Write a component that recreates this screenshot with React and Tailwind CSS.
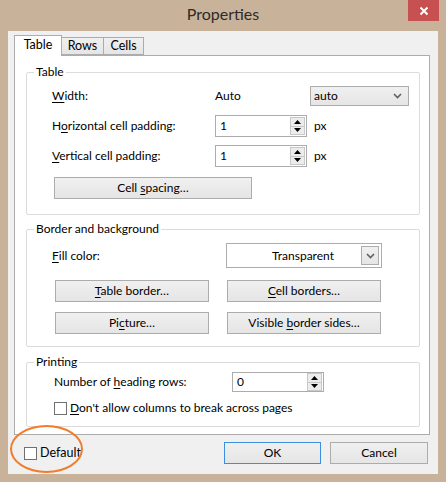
import React from 'react'

const font = { fontFamily: '"Segoe UI", Lato, "Noto Sans", sans-serif' }

function U({ children }) {
  return <span className="underline underline-offset-2">{children}</span>
}

function Button({ children, className = '' }) {
  return (
    <div className={`flex items-center justify-center border border-[#acacac] bg-gradient-to-b from-[#f0f0f0] to-[#e5e5e5] text-[12px] text-black ${className}`}>
      {children}
    </div>
  )
}

function Chevron() {
  return (
    <svg width="9" height="6" viewBox="0 0 9 6">
      <path d="M1 1 L4.5 4.5 L8 1" fill="none" stroke="#606060" strokeWidth="1.6" />
    </svg>
  )
}

function Spin({ value, h = 'h-[22px]' }) {
  return (
    <div className={`flex w-[92px] ${h} items-center border border-[#acacac] bg-white pl-[4px] pr-[1px]`}>
      <span className="flex-1 text-[12px] leading-none">{value}</span>
      <div className="flex h-[18px] w-[15px] flex-col border border-[#c8c8c8] bg-[#ececec]">
        <div className="flex flex-1 items-center justify-center border-b border-[#c8c8c8]">
          <svg width="7" height="4" viewBox="0 0 7 4"><path d="M0 4 L3.5 0 L7 4 Z" fill="#000" /></svg>
        </div>
        <div className="flex flex-1 items-center justify-center">
          <svg width="7" height="4" viewBox="0 0 7 4"><path d="M0 0 L3.5 4 L7 0 Z" fill="#000" /></svg>
        </div>
      </div>
    </div>
  )
}

function Check() {
  return <div className="h-[13px] w-[13px] border border-[#707070] bg-white" />
}

function Group({ title, className = '', inner = '', children }) {
  return (
    <fieldset className={`rounded-[2px] border border-[#dcdcdc] ${className}`}>
      <legend className="ml-[7px] px-[2px] text-[12px] leading-[16px]">{title}</legend>
      <div className={inner}>{children}</div>
    </fieldset>
  )
}

export default function App() {
  return (
    <div className="flex h-[482px] w-[446px] flex-col bg-[#c9b29a] text-black" style={font}>
      {/* title bar */}
      <div className="grid h-[31px] shrink-0 grid-cols-[1fr_auto_1fr]">
        <div />
        <div className="pt-[4px] text-[16px] leading-[20px] text-[#2b2b2b]">Properties</div>
        <div className="flex justify-end pr-[7px]">
          <div className="flex h-[21px] w-[31px] items-center justify-center bg-[#c75050]">
            <svg width="10" height="10" viewBox="0 0 10 10">
              <path d="M1.5 1.5 L8.5 8.5 M8.5 1.5 L1.5 8.5" stroke="#fff" strokeWidth="2" />
            </svg>
          </div>
        </div>
      </div>

      {/* client area */}
      <div className="mx-[8px] mb-[8px] flex flex-1 flex-col bg-[#f0f0f0] pl-[6px] pr-[8px] pt-[4px]">
        {/* tabs */}
        <div className="flex h-[20px] items-end text-[12.5px]">
          <div className="relative z-10 -mb-px flex h-[21px] w-[48px] items-center justify-center border border-b-0 border-[#acacac] bg-white pb-[2px]">
            Table
          </div>
          <div className="flex h-[18px] w-[42px] items-center justify-center border border-l-0 border-[#acacac] bg-gradient-to-b from-[#f0f0f0] to-[#e5e5e5]">
            Rows
          </div>
          <div className="flex h-[18px] w-[40px] items-center justify-center border border-l-0 border-[#acacac] bg-gradient-to-b from-[#f0f0f0] to-[#e5e5e5]">
            Cells
          </div>
        </div>

        {/* panel */}
        <div className="flex flex-col border border-[#acacac] bg-white pb-[7px] pl-[11px] pr-[9px] pt-[8px] text-[12px]">
          <Group title="Table" inner="pb-[15px] pl-[25px]">
            <div className="mt-[6px] flex h-[20px] items-center">
              <div className="w-[163px]"><U>W</U>idth:</div>
              <div className="w-[95px]">Auto</div>
              <div className="flex h-[20px] w-[99px] items-center justify-between border border-[#acacac] bg-gradient-to-b from-[#f0f0f0] to-[#e5e5e5] pl-[3px] pr-[6px]">
                <span>auto</span>
                <Chevron />
              </div>
            </div>
            <div className="mt-[9px] flex items-center">
              <div className="w-[163px]">H<U>o</U>rizontal cell padding:</div>
              <Spin value="1" />
              <span className="ml-[7px]">px</span>
            </div>
            <div className="mt-[8px] flex items-center">
              <div className="w-[163px]"><U>V</U>ertical cell padding:</div>
              <Spin value="1" />
              <span className="ml-[7px]">px</span>
            </div>
            <Button className="ml-[2px] mt-[10px] h-[22px] w-[198px]">
              <span>Cell <U>s</U>pacing…</span>
            </Button>
          </Group>

          <Group title="Border and background" className="mt-[6px]" inner="pb-[12px] pl-[25px]">
            <div className="mt-[6px] flex items-center">
              <div className="w-[174px]"><U>F</U>ill color:</div>
              <div className="flex h-[25px] w-[156px] items-center border border-[#acacac] bg-white pr-[2px]">
                <span className="flex-1 pl-[18px] text-center">Transparent</span>
                <div className="flex h-[19px] w-[18px] items-center justify-center border border-[#acacac] bg-gradient-to-b from-[#f0f0f0] to-[#e5e5e5]">
                  <Chevron />
                </div>
              </div>
            </div>
            <div className="ml-[3px] mt-[12px] flex gap-[18px]">
              <Button className="h-[22px] w-[154px]"><span><U>T</U>able border…</span></Button>
              <Button className="h-[22px] w-[154px]"><span><U>C</U>ell borders…</span></Button>
            </div>
            <div className="ml-[3px] mt-[10px] flex gap-[18px]">
              <Button className="h-[22px] w-[154px]"><span>Pi<U>c</U>ture…</span></Button>
              <Button className="h-[22px] w-[154px]"><span>Visible <U>b</U>order sides…</span></Button>
            </div>
          </Group>

          <Group title="Printing" className="mt-[7px]" inner="pb-[9px] pl-[27px]">
            <div className="mt-[2px] flex items-center">
              <div className="w-[178px]">Number of <U>h</U>eading rows:</div>
              <Spin value="0" h="h-[20px]" />
            </div>
            <div className="mt-[7px] flex items-center gap-[3px]">
              <Check />
              <span><U>D</U>on't allow columns to break across pages</span>
            </div>
          </Group>
        </div>

        {/* bottom bar */}
        <div className="mt-[7px] flex items-center text-[12px]">
          <div className="relative ml-[10px] flex items-center gap-[3px]">
            <Check />
            <span className="text-[12.5px]">Default</span>
            <div className="pointer-events-none absolute -left-[14px] -top-[19px] h-[48px] w-[73px] rounded-[50%] border-2 border-[#f07c2c]" />
          </div>
          <div className="flex-1" />
          <Button className="h-[22px] w-[97px] !border-[#3c8ee0]">OK</Button>
          <Button className="ml-[9px] mr-[2px] h-[22px] w-[98px]">Cancel</Button>
        </div>
      </div>
    </div>
  )
}
